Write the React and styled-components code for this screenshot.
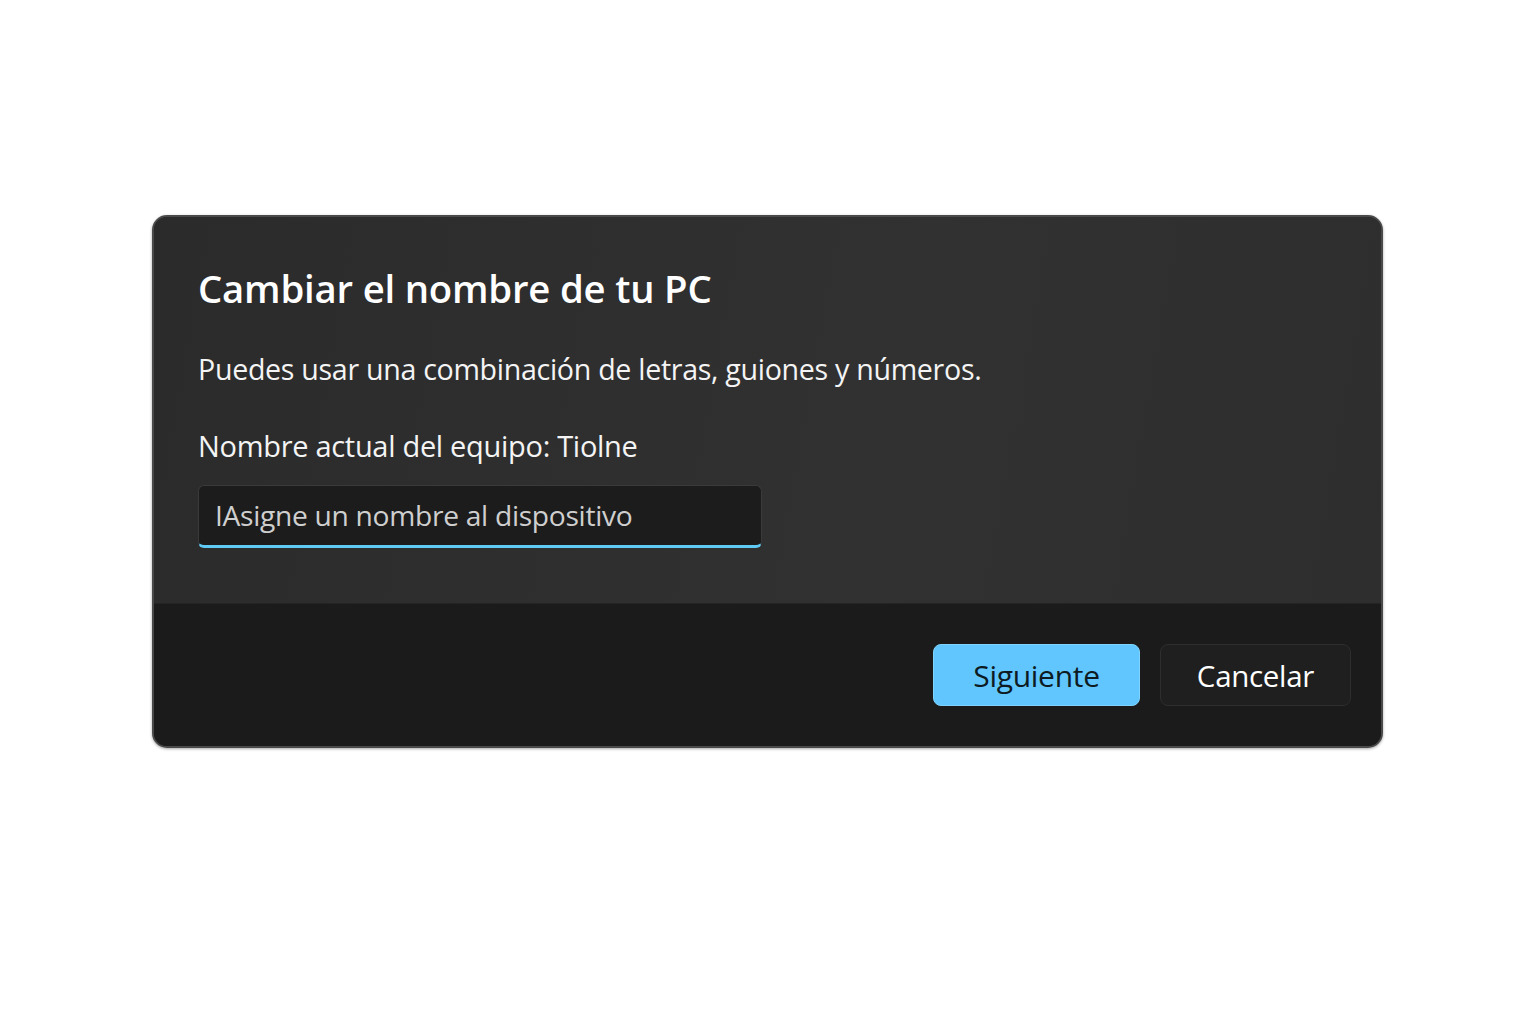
import React from 'react';
import styled, { createGlobalStyle } from 'styled-components';

const GlobalStyle = createGlobalStyle`
  html, body {
    margin: 0;
    padding: 0;
    background: #ffffff;
    font-family: "Open Sans", "Noto Sans", sans-serif;
  }
`;

const Page = styled.div`
  width: 1536px;
  height: 1024px;
  box-sizing: border-box;
  padding-top: 215px;
  padding-left: 152px;
`;

const Dialog = styled.div`
  width: 1231px;
  height: 533px;
  box-sizing: border-box;
  border: 2px solid #4a4a4a;
  border-radius: 15px;
  overflow: hidden;
  display: flex;
  flex-direction: column;
  background: #1c1c1c;
  box-shadow: 0 1px 3px rgba(0, 0, 0, 0.35);
`;

const Body = styled.div`
  height: 387px;
  box-sizing: border-box;
  padding: 46px 44px 0 44px;
  background: linear-gradient(100deg, #2b2b2b 0%, #313131 60%, #2e2e2e 100%);
  border-bottom: 1px solid #242424;
  display: flex;
  flex-direction: column;
`;

const Title = styled.h1`
  margin: 0;
  font-size: 38.3px;
  line-height: 50px;
  font-weight: 600;
  color: #ffffff;
  letter-spacing: -0.2px;
`;

const Text = styled.p`
  margin: ${p => p.$top}px 0 0 0;
  font-size: ${p => p.$size}px;
  line-height: 38px;
  font-weight: 400;
  color: #f4f4f4;
  letter-spacing: -0.3px;
`;

const Input = styled.div`
  margin-top: 20px;
  width: 564px;
  height: 63px;
  box-sizing: border-box;
  display: flex;
  align-items: center;
  padding: 0 16px 2px 16px;
  background: #1c1c1c;
  border: 1px solid #3a3a3a;
  border-bottom: 3px solid #5fcbf5;
  border-radius: 6px;
  font-size: 28.2px;
  color: #cfcfcf;
  letter-spacing: -0.3px;
`;

const Footer = styled.div`
  flex: 1;
  display: flex;
  justify-content: flex-end;
  align-items: center;
  gap: 20px;
  padding: 0 30px 0 0;
  background: #1b1b1b;
`;

const Button = styled.button`
  height: 62px;
  width: ${p => p.$w}px;
  box-sizing: border-box;
  border-radius: 8px;
  font-family: "Open Sans", "Noto Sans", sans-serif;
  font-size: ${p => (p.$primary ? 30 : 29.5)}px;
  letter-spacing: -0.3px;
  cursor: pointer;
  background: ${p => (p.$primary ? '#60c6fd' : '#1f1f1f')};
  color: ${p => (p.$primary ? '#0d1a22' : '#ffffff')};
  border: 1px solid ${p => (p.$primary ? '#7fd4ff' : '#2e2e2e')};
`;

export default function App() {
  return (
    <Page>
      <GlobalStyle />
      <Dialog>
        <Body>
          <Title>Cambiar el nombre de tu PC</Title>
          <Text $top={37} $size={28.6}>Puedes usar una combinación de letras, guiones y números.</Text>
          <Text $top={39} $size={29}>Nombre actual del equipo: Tiolne</Text>
          <Input>IAsigne un nombre al dispositivo</Input>
        </Body>
        <Footer>
          <Button $primary $w={207}>Siguiente</Button>
          <Button $w={191}>Cancelar</Button>
        </Footer>
      </Dialog>
    </Page>
  );
}
